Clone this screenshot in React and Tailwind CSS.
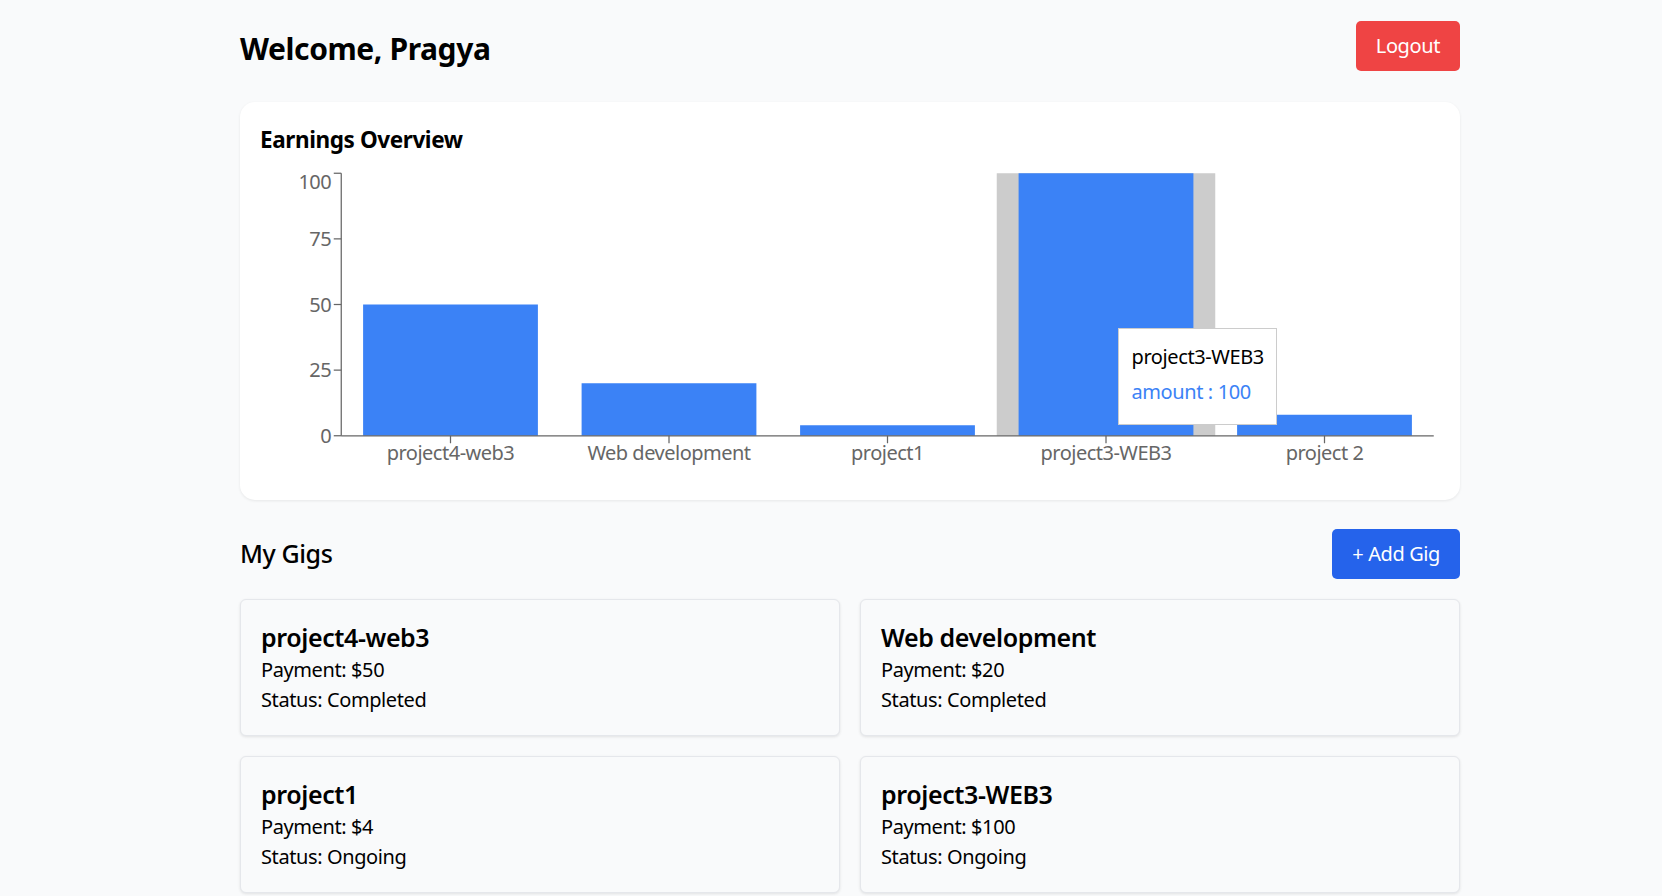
// Dashboard: welcome header, earnings chart, gig list

const gigs = [
  { title: 'project4-web3', amount: 50, status: 'Completed' },
  { title: 'Web development', amount: 20, status: 'Completed' },
  { title: 'project1', amount: 4, status: 'Ongoing' },
  { title: 'project3-WEB3', amount: 100, status: 'Ongoing' },
  { title: 'project 2', amount: 8, status: 'Ongoing' },
];

// chart drawn in 944x250 units, shown at 1180x312.5
const PLOT = { left: 65, right: 939, top: 5, bottom: 215 };

function EarningsChart({ data, hovered }) {
  const band = (PLOT.right - PLOT.left) / data.length;
  const gap = band * 0.1;
  const yOf = (v) => PLOT.bottom - (v / 100) * (PLOT.bottom - PLOT.top);
  const ticks = [0, 25, 50, 75, 100];

  return (
    <div className="relative h-[312.5px] w-full">
      <svg
        viewBox="0 0 944 250"
        className="block h-full w-full overflow-visible"
        fontFamily="'Noto Sans', sans-serif"
        letterSpacing="-0.4"
      >
        {/* hover cursor */}
        <rect
          x={PLOT.left + hovered * band}
          y={PLOT.top}
          width={band}
          height={PLOT.bottom - PLOT.top}
          fill="#cccccc"
        />

        {data.map((d, i) => (
          <rect
            key={d.title}
            x={PLOT.left + i * band + gap}
            y={yOf(d.amount)}
            width={band - gap * 2}
            height={PLOT.bottom - yOf(d.amount)}
            fill="#3b82f6"
          />
        ))}

        {/* y axis */}
        <line x1={PLOT.left} y1={PLOT.top} x2={PLOT.left} y2={PLOT.bottom} stroke="#666" />
        {ticks.map((t) => (
          <g key={t}>
            <line x1={PLOT.left - 6} y1={yOf(t)} x2={PLOT.left} y2={yOf(t)} stroke="#666" />
            <text
              x={PLOT.left - 8}
              y={t === 100 ? yOf(t) + 7 : yOf(t)}
              dy="0.355em"
              textAnchor="end"
              fontSize="16"
              fill="#666"
            >
              {t}
            </text>
          </g>
        ))}

        {/* x axis */}
        <line x1={PLOT.left} y1={PLOT.bottom} x2={PLOT.right} y2={PLOT.bottom} stroke="#666" />
        {data.map((d, i) => {
          const cx = PLOT.left + i * band + band / 2;
          return (
            <g key={d.title}>
              <line x1={cx} y1={PLOT.bottom} x2={cx} y2={PLOT.bottom + 6} stroke="#666" />
              <text x={cx} y={PLOT.bottom + 8} dy="0.71em" textAnchor="middle" fontSize="16" fill="#666">
                {d.title}
              </text>
            </g>
          );
        })}
      </svg>

      {/* tooltip */}
      <div className="absolute left-[858px] top-[161px] border border-[#cccccc] bg-white px-[12.5px] py-[12.5px] whitespace-nowrap">
        <p className="m-0 text-[20px] leading-[30px] text-black">{data[hovered].title}</p>
        <p className="m-0 pt-[5px] pb-[5px] text-[20px] leading-[30px] text-[#3b82f6]">
          amount : {data[hovered].amount}
        </p>
      </div>
    </div>
  );
}

function GigCard({ gig }) {
  return (
    <div className="rounded-[6px] border border-gray-200 bg-[#f9fafb] p-5 shadow-[0_1px_3px_rgba(0,0,0,0.1)]">
      <h3 className="text-[25px] leading-[35px] font-semibold text-black">{gig.title}</h3>
      <p className="text-[20px] leading-[30px] text-black">Payment: ${gig.amount}</p>
      <p className="text-[20px] leading-[30px] text-black">Status: {gig.status}</p>
    </div>
  );
}

export default function App() {
  return (
    <div className="min-h-screen bg-[#f9fafb] font-['Noto_Sans',sans-serif] tracking-[-0.025em] text-black">
      <div className="ml-[240px] w-[1220px] pt-[21px] pb-8">
        {/* header */}
        <div className="flex items-center justify-between">
          <h1 className="mt-[6px] text-[30px] leading-[40px] font-bold">Welcome, Pragya</h1>
          <button className="h-[50px] rounded-[5px] bg-[#ef4444] px-5 text-[20px] leading-[30px] text-white">
            Logout
          </button>
        </div>

        {/* earnings */}
        <div className="mt-[31px] rounded-[15px] bg-white p-5 shadow-[0_1px_3px_rgba(0,0,0,0.08)]">
          <h2 className="mb-[10px] text-[22.5px] leading-[35px] font-bold">Earnings Overview</h2>
          <EarningsChart data={gigs} hovered={3} />
        </div>

        {/* gigs */}
        <div className="mt-[29px] mb-5 flex items-center justify-between">
          <h2 className="text-[25px] leading-[35px] font-medium">My Gigs</h2>
          <button className="h-[50px] rounded-[5px] bg-[#2563eb] px-5 text-[20px] leading-[30px] text-white">
            + Add Gig
          </button>
        </div>

        <div className="grid grid-cols-2 gap-5">
          {gigs.map((g) => (
            <GigCard key={g.title} gig={g} />
          ))}
        </div>
      </div>
    </div>
  );
}
